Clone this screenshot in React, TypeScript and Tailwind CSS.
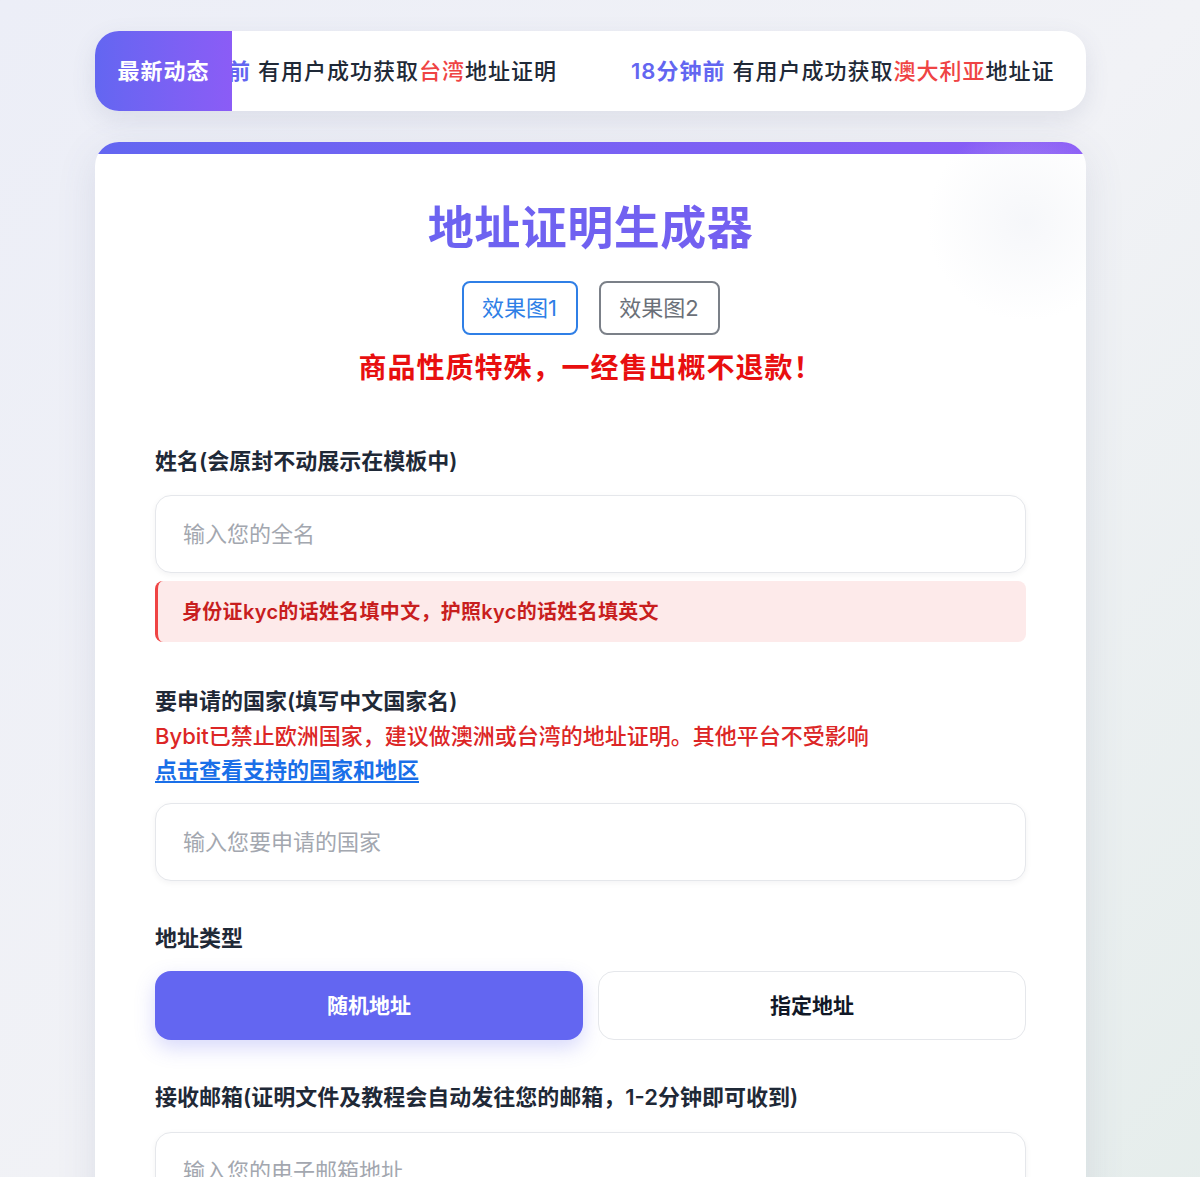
const FONT = "font-['Inter','Noto_Sans_CJK_SC',sans-serif]";

function TickerItem({ time, country, lead }: { time: string; country: string; lead?: string }) {
  return (
    <span className={`flex shrink-0 items-center text-[22px] tracking-[1px] ${lead ?? ""}`}>
      <span className="font-semibold text-[#6366f1]">{time}</span>
      <span className="ml-[7px] font-medium text-[#1f2937]">有用户成功获取</span>
      <span className="font-medium text-[#ef4444]">{country}</span>
      <span className="font-medium text-[#1f2937]">地址证明</span>
    </span>
  );
}

function Field({ placeholder }: { placeholder: string }) {
  return (
    <input
      placeholder={placeholder}
      className="h-[78px] w-full rounded-2xl border border-[#e5e7eb] bg-white px-[27px] text-[22px] text-[#1f2937] shadow-[0_2px_6px_rgba(15,23,42,0.05)] outline-none placeholder:text-[#a3a7af]"
    />
  );
}

export default function App() {
  return (
    <div className={`${FONT} min-h-[1177px] bg-gradient-to-br from-[#eceef7] via-[#f1f2f6] to-[#e5edeb] pt-[31px]`}>
      <div className="ml-[95px] w-[991px]">
        {/* ticker */}
        <div className="flex h-[80px] overflow-hidden rounded-[24px] bg-white shadow-[0_8px_24px_rgba(80,90,130,0.12)]">
          <div className="flex w-[137px] shrink-0 items-center justify-center bg-gradient-to-r from-[#6366f1] to-[#8b5cf6] text-[22px] font-bold tracking-[1px] text-white">
            最新动态
          </div>
          <div className="mr-[31px] flex-1 overflow-hidden">
            <div className="flex h-full items-center gap-[74px] whitespace-nowrap">
              <TickerItem time="12分钟前" country="台湾" lead="-ml-[75px]" />
              <TickerItem time="18分钟前" country="澳大利亚" />
              <TickerItem time="25分钟前" country="新加坡" />
            </div>
          </div>
        </div>

        {/* card */}
        <div className="relative mt-[31px] overflow-hidden rounded-t-[24px] bg-white pb-[40px] shadow-[0_10px_40px_rgba(80,90,130,0.12)]">
          <div className="h-[12px] bg-gradient-to-r from-[#6366f1] to-[#8b5cf6]" />
          <div className="pointer-events-none absolute -right-[40px] -top-[20px] h-[200px] w-[200px] rounded-full bg-[radial-gradient(circle,rgba(232,235,242,0.4),rgba(255,255,255,0)_70%)]" />

          <h1 className="mt-[46px] bg-gradient-to-r from-[#6366f1] to-[#7c5cf0] bg-clip-text text-center text-[46px] font-bold leading-[55px] tracking-[0.5px] text-transparent">
            地址证明生成器
          </h1>

          <div className="mt-[26px] flex justify-center gap-[21px]">
            <button className="h-[54px] w-[116px] rounded-lg border-2 border-[#2f7fe6] text-[22px] text-[#2f7fe6]">
              效果图1
            </button>
            <button className="h-[54px] w-[121px] rounded-lg border-2 border-[#7b8088] text-[22px] text-[#6b7078]">
              效果图2
            </button>
          </div>

          <p className="mt-[12px] text-center text-[28px] font-bold leading-[42px] tracking-[1px] text-[#e80f0f]">
            商品性质特殊，一经售出概不退款！
          </p>

          <div className="mx-[60px] mt-[56px]">
            <label className="block text-[22px] font-semibold leading-[32px] text-[#1f2937]">
              姓名(会原封不动展示在模板中)
            </label>
            <div className="mt-[18px]">
              <Field placeholder="输入您的全名" />
            </div>
            <div className="mt-[8px] flex h-[61px] items-center rounded-lg border-l-[3px] border-[#ef4444] bg-[#fdeaea] pl-[24px] text-[20px] font-semibold tracking-[0.3px] text-[#c81e1e]">
              身份证kyc的话姓名填中文，护照kyc的话姓名填英文
            </div>

            <label className="mt-[42px] block text-[22px] font-semibold leading-[34px] text-[#1f2937]">
              要申请的国家(填写中文国家名)
            </label>
            <p className="mt-[1px] text-[22px] font-medium leading-[34px] text-[#dc2626]">
              Bybit已禁止欧洲国家，建议做澳洲或台湾的地址证明。其他平台不受影响
            </p>
            <a href="#" className="block w-fit text-[22px] font-semibold leading-[34px] text-[#1a6fe8] underline underline-offset-[3px]">
              点击查看支持的国家和地区
            </a>
            <div className="mt-[16px]">
              <Field placeholder="输入您要申请的国家" />
            </div>

            <label className="mt-[41px] block text-[22px] font-semibold leading-[32px] text-[#1f2937]">地址类型</label>
            <div className="mt-[17px] grid grid-cols-2 gap-[15px]">
              <button className="h-[69px] rounded-2xl bg-[#6366f1] text-[21px] font-bold text-white shadow-[0_8px_20px_rgba(99,102,241,0.25)]">
                随机地址
              </button>
              <button className="h-[69px] rounded-2xl border border-[#e5e7eb] bg-white text-[21px] font-bold text-[#111827]">
                指定地址
              </button>
            </div>

            <label className="mt-[41px] block text-[22px] font-semibold leading-[32px] text-[#1f2937]">
              接收邮箱(证明文件及教程会自动发往您的邮箱，1-2分钟即可收到)
            </label>
            <div className="mt-[19px]">
              <Field placeholder="输入您的电子邮箱地址" />
            </div>
          </div>
        </div>
      </div>
    </div>
  );
}
